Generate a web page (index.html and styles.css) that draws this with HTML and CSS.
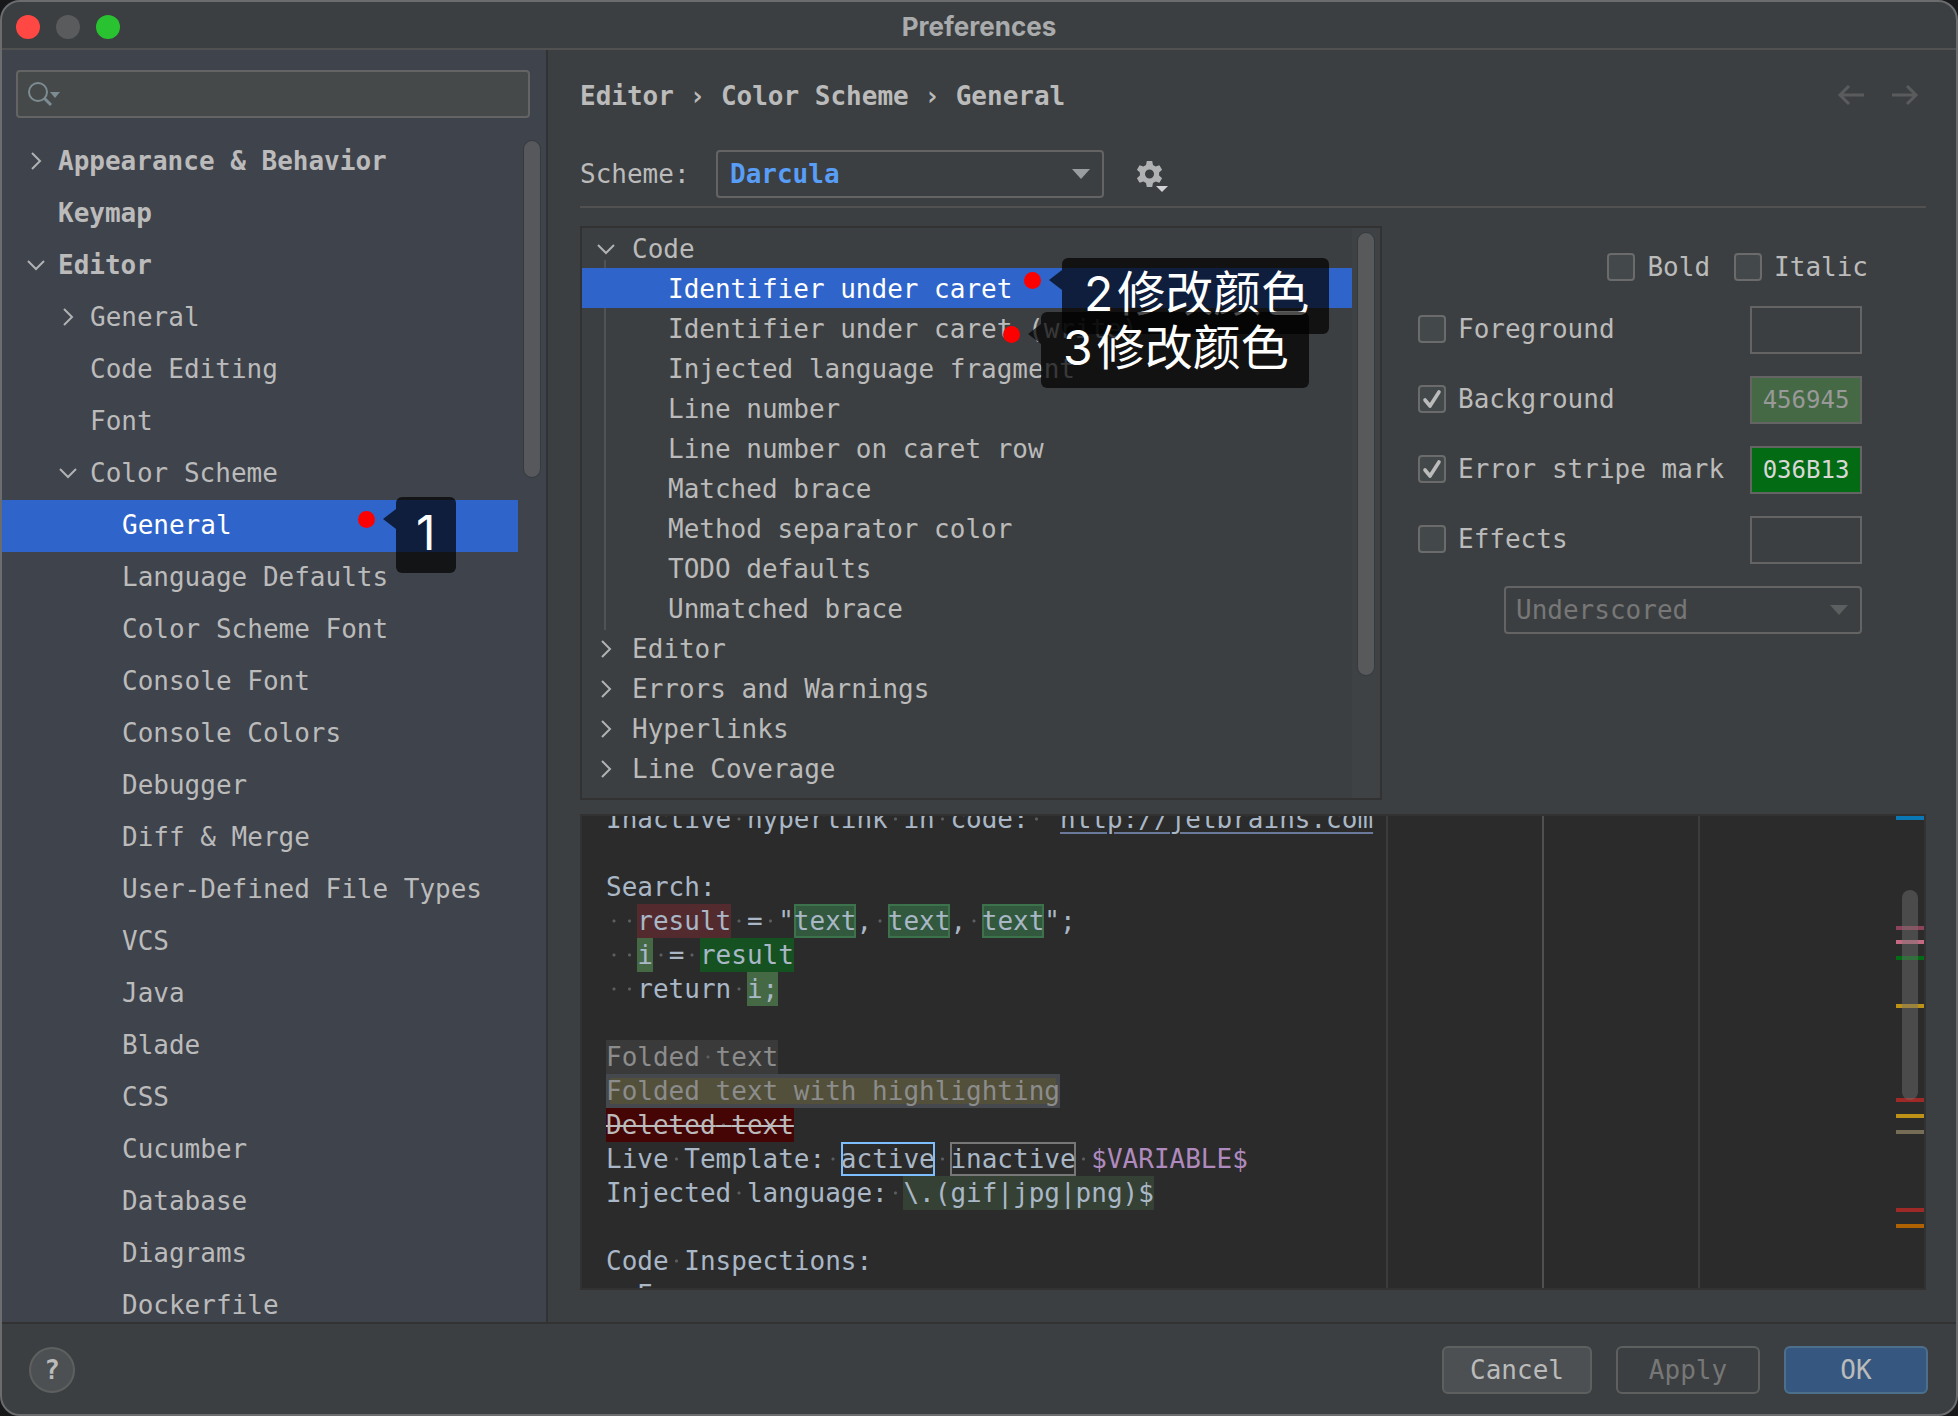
FILE: index.html
```html
<!DOCTYPE html>
<html lang="en">
<head>
<meta charset="utf-8">
<title>Preferences</title>
<link rel="stylesheet" href="styles.css">
</head>
<body>
<svg class="defs" aria-hidden="true">
  <symbol id="right" viewBox="0 0 20 20"><path d="M6 2l8 8-8 8" fill="none" stroke="currentColor" stroke-width="2"/></symbol>
  <symbol id="down" viewBox="0 0 20 20"><path d="M2 6l8 8 8-8" fill="none" stroke="currentColor" stroke-width="2"/></symbol>
  <symbol id="tri" viewBox="0 0 18 10"><path d="M0 0h18l-9 10z" fill="currentColor"/></symbol>
  <symbol id="tick" viewBox="0 0 28 28"><path d="M7 15l5 6L21 7" fill="none" stroke="currentColor" stroke-width="3.6" stroke-linecap="round" stroke-linejoin="round"/></symbol>
</svg>
<div class="window">
  <header class="titlebar">
    <div class="lights"><button class="light close" aria-label="Close"></button><button class="light min" aria-label="Minimize"></button><button class="light zoom" aria-label="Zoom"></button></div>
    <h1>Preferences</h1>
  </header>
  <div class="body">
    <nav class="sidebar">
      <div class="search">
        <svg width="34" height="26" viewBox="0 0 34 26" aria-hidden="true"><circle cx="10" cy="11" r="9" fill="none" stroke="#7d8b92" stroke-width="2"/><path d="M16 17l7 7" stroke="#7d8b92" stroke-width="3"/><path d="M22 11h10l-5 6z" fill="#7d8b92"/></svg>
        <input type="text" aria-label="Search settings">
      </div>
      <div class="navscroll">
        <ul class="navlist">
          <li class="strong"><svg class="chev"><use href="#right"/></svg>Appearance &amp; Behavior</li>
          <li class="strong"><span class="chev"></span>Keymap</li>
          <li class="strong"><svg class="chev"><use href="#down"/></svg>Editor</li>
          <li class="l1"><svg class="chev"><use href="#right"/></svg>General</li>
          <li class="l1"><span class="chev"></span>Code Editing</li>
          <li class="l1"><span class="chev"></span>Font</li>
          <li class="l1"><svg class="chev"><use href="#down"/></svg>Color Scheme</li>
          <li class="l2 selected">General
            <span class="note note-one"><span class="dot"></span><span class="tip"></span><span class="bubble">1</span></span></li>
          <li class="l2">Language Defaults</li>
          <li class="l2">Color Scheme Font</li>
          <li class="l2">Console Font</li>
          <li class="l2">Console Colors</li>
          <li class="l2">Debugger</li>
          <li class="l2">Diff &amp; Merge</li>
          <li class="l2">User-Defined File Types</li>
          <li class="l2">VCS</li>
          <li class="l2">Java</li>
          <li class="l2">Blade</li>
          <li class="l2">CSS</li>
          <li class="l2">Cucumber</li>
          <li class="l2">Database</li>
          <li class="l2">Diagrams</li>
          <li class="l2">Dockerfile</li>
        </ul>
        <div class="track"><div class="thumb nav-thumb"></div></div>
      </div>
    </nav>
    <main class="content">
      <div class="crumbs">
        <h2>Editor › Color Scheme › General</h2>
        <button class="plain" aria-label="Back"><svg width="28" height="22" viewBox="0 0 28 22"><path d="M27 10H3M12 1l-9 9 9 9" fill="none" stroke="#5a5b5c" stroke-width="3"/></svg></button>
        <button class="plain" aria-label="Forward"><svg width="28" height="22" viewBox="0 0 28 22"><path d="M1 10h24M16 1l9 9-9 9" fill="none" stroke="#5a5b5c" stroke-width="3"/></svg></button>
      </div>
      <div class="scheme">
        <label for="scheme">Scheme:</label>
        <span class="select scheme-select"><select id="scheme"><option>Darcula</option></select><svg><use href="#tri"/></svg></span>
        <button class="plain" aria-label="Scheme actions"><svg width="33" height="36" viewBox="0 0 33 36"><path transform="translate(0 4)" fill="#afb1b3" fill-rule="evenodd" d="M10.800 1h5.400l.8 4 2.600 1.500 3.800-1.300 2.700 4.600-3 2.700v3l3 2.700-2.700 4.600-3.800-1.300-2.600 1.500-.8 4h-5.400l-.8-4-2.600-1.500-3.800 1.300L.9 18.200l3-2.700v-3l-3-2.700 2.700-4.600 3.800 1.300L10 5zM13.500 9.500a4.500 4.500 0 1 0 0 9 4.500 4.500 0 0 0 0-9z"/><path d="M20 30h12l-6 6z" fill="#d0d2d4"/></svg></button>
      </div>
      <div class="panes">
        <div class="upper">
          <div class="tree">
            <ul class="treelist">
              <li><svg class="chev"><use href="#down"/></svg>Code</li>
              <li class="kid selected">Identifier under caret
                <span class="note note-two"><span class="dot"></span><span class="tip"></span><span class="bubble"><span class="num">2</span>修改颜色</span></span></li>
              <li class="kid">Identifier under caret (write)
                <span class="note note-three"><span class="dot"></span><span class="tip"></span><span class="bubble"><span class="num">3</span>修改颜色</span></span></li>
              <li class="kid">Injected language fragment</li>
              <li class="kid">Line number</li>
              <li class="kid">Line number on caret row</li>
              <li class="kid">Matched brace</li>
              <li class="kid">Method separator color</li>
              <li class="kid">TODO defaults</li>
              <li class="kid">Unmatched brace</li>
              <li><svg class="chev"><use href="#right"/></svg>Editor</li>
              <li><svg class="chev"><use href="#right"/></svg>Errors and Warnings</li>
              <li><svg class="chev"><use href="#right"/></svg>Hyperlinks</li>
              <li><svg class="chev"><use href="#right"/></svg>Line Coverage</li>
              <li><span class="chev"></span>Live Template</li>
            </ul>
            <div class="track tree-track"><div class="thumb tree-thumb"></div></div>
          </div>
          <form class="attrs">
            <div class="styles">
              <label class="check"><span class="box"><input type="checkbox"></span>Bold</label>
              <label class="check"><span class="box"><input type="checkbox"></span>Italic</label>
            </div>
            <div class="attr"><label class="check"><span class="box"><input type="checkbox"></span>Foreground</label><button type="button" class="swatch" aria-label="Foreground color"></button></div>
            <div class="attr"><label class="check"><span class="box"><input type="checkbox" checked><svg><use href="#tick"/></svg></span>Background</label><button type="button" class="swatch green">456945</button></div>
            <div class="attr"><label class="check"><span class="box"><input type="checkbox" checked><svg><use href="#tick"/></svg></span>Error stripe mark</label><button type="button" class="swatch vivid">036B13</button></div>
            <div class="attr"><label class="check"><span class="box"><input type="checkbox"></span>Effects</label><button type="button" class="swatch" aria-label="Effects color"></button></div>
            <span class="select effect-select"><select aria-label="Effect type" disabled><option>Underscored</option></select><svg><use href="#tri"/></svg></span>
          </form>
        </div>
        <div class="preview">
          <div class="code">
            <div>Inactive<i> </i>hyperlink<i> </i>in<i> </i>code:<i> </i>"<a href="#link">http://jetbrains.com</a>"</div>
            <div></div>
            <div>Search:</div>
            <div><i> </i><i> </i><b class="write">result</b><i> </i>=<i> </i>"<b class="found">text</b>,<i> </i><b class="found">text</b>,<i> </i><b class="found">text</b>";</div>
            <div><i> </i><i> </i><b class="ident">i</b><i> </i>=<i> </i><b class="read">result</b></div>
            <div><i> </i><i> </i>return<i> </i><b class="ident">i;</b></div>
            <div></div>
            <div><b class="fold">Folded<i> </i>text</b></div>
            <div><b class="foldhi">Folded text with highlighting</b></div>
            <div><b class="deleted">Deleted<i> </i>text</b></div>
            <div>Live<i> </i>Template:<i> </i><b class="active">active</b><i> </i><b class="inactive">inactive</b><i> </i><b class="var">$VARIABLE$</b></div>
            <div>Injected<i> </i>language:<i> </i><b class="inject">\.(gif|jpg|png)$</b></div>
            <div></div>
            <div>Code<i> </i>Inspections:</div>
            <div><i> </i><i> </i>Error</div>
          </div>
          <div class="stripes">
            <span class="mark" style="top:0;background:#0a78b4"></span>
            <span class="mark" style="top:110px;background:#8c4258"></span>
            <span class="mark" style="top:124px;background:#c46a80"></span>
            <span class="mark" style="top:140px;background:#036b13"></span>
            <span class="mark" style="top:188px;background:#be9117"></span>
            <span class="mark" style="top:282px;background:#9e2927"></span>
            <span class="mark" style="top:298px;background:#be9117"></span>
            <span class="mark" style="top:314px;background:#756d56"></span>
            <span class="mark" style="top:392px;background:#9e2927"></span>
            <span class="mark" style="top:408px;background:#b06100"></span>
            <div class="code-thumb"></div>
          </div>
        </div>
      </div>
    </main>
  </div>
  <footer class="footer">
    <button class="help" aria-label="Help">?</button>
    <button class="btn wide">Cancel</button>
    <button class="btn" disabled>Apply</button>
    <button class="btn primary">OK</button>
  </footer>
</div>
</body>
</html>
```
FILE: styles.css
```css
* { box-sizing: border-box; }
body {
  margin: 0;
  background: #17181a;
  color: #bbbbbb;
  font: 26px/40px "DejaVu Sans Mono", monospace;
}
button, input, select { font: inherit; color: inherit; margin: 0; padding: 0; }
ul { list-style: none; margin: 0; padding: 0; }
.defs { display: none; }
.plain { border: 0; background: none; display: flex; }

.window {
  height: 100vh;
  display: flex;
  flex-direction: column;
  background: #3c3f41;
  border: 2px solid #6a6c6e;
  border-radius: 20px;
  overflow: hidden;
}
.titlebar {
  flex: none;
  height: 48px;
  display: grid;
  grid-template-columns: 1fr auto 1fr;
  align-items: center;
  padding: 4px 14px 0;
  border-bottom: 2px solid #515151;
}
.titlebar h1 { margin: 0; font: 700 26px/32px Inter, sans-serif; color: #a9abac; }
.lights { display: flex; gap: 16px; }
.light { width: 24px; height: 24px; border: 0; border-radius: 50%; }
.close { background: #ff4744; }
.min { background: #5a5b5d; }
.zoom { background: #29c231; }

.body { flex: 1; min-height: 0; display: flex; }
.sidebar {
  flex: none;
  width: 546px;
  display: flex;
  flex-direction: column;
  background: #3f434c;
  border-right: 2px solid #323232;
  padding-top: 20px;
}
.search {
  flex: none;
  display: flex;
  align-items: center;
  gap: 8px;
  height: 48px;
  margin: 0 16px 18px 14px;
  padding: 0 10px;
  background: #45494a;
  border: 2px solid #646464;
  border-radius: 4px;
}
.search input { flex: 1; min-width: 0; border: 0; background: none; outline: 0; }
.navscroll { flex: 1; min-height: 0; display: flex; overflow: hidden; }
.navlist { flex: 1; }
.navlist li {
  position: relative;
  display: flex;
  align-items: center;
  gap: 12px;
  height: 52px;
  padding: 0 0 2px 24px;
  white-space: nowrap;
}
.navlist .l1 { padding-left: 56px; }
.navlist .l2 { padding-left: 120px; }
.navlist .strong { font-weight: 700; }
.chev { flex: none; width: 20px; height: 20px; color: #b0b2b4; }
.navlist .selected, .treelist .selected { background: #2f65ca; color: #ffffff; }
.track { flex: none; width: 28px; padding: 4px 5px; }
.thumb { width: 18px; border: 1px solid #36393d; border-radius: 9px; background: #56585b; }
.nav-thumb { height: 338px; }

.content {
  flex: 1;
  min-width: 0;
  display: flex;
  flex-direction: column;
  padding: 26px 30px 32px 32px;
}
.crumbs { display: flex; align-items: center; gap: 26px; height: 40px; padding-right: 7px; }
.crumbs h2 { flex: 1; margin: 0; font-size: 26px; line-height: 40px; }
.scheme {
  display: flex;
  align-items: center;
  height: 92px;
  padding-top: 34px;
  padding-bottom: 8px;
  border-bottom: 2px solid #515151;
}
.scheme label { width: 136px; }
.select { display: grid; align-items: center; height: 48px; }
.select select {
  grid-area: 1 / 1;
  width: 100%;
  height: 48px;
  padding: 0 12px;
  appearance: none;
  background: #3c3f41;
  border: 2px solid #646464;
  border-radius: 4px;
  opacity: 1;
}
.select svg { grid-area: 1 / 1; justify-self: end; width: 18px; height: 10px; margin-right: 14px; color: #9a9da0; pointer-events: none; }
.scheme-select { width: 388px; margin-right: 32px; }
.scheme-select select { color: #589df6; font-weight: 700; }

.panes { flex: 1; min-height: 0; display: flex; flex-direction: column; gap: 14px; padding-top: 18px; }
.upper { flex: 574 1 0; min-height: 0; display: flex; }
.tree { flex: 1; min-width: 0; display: flex; border: 2px solid #323232; overflow: hidden; }
.treelist {
  flex: 1;
  background: linear-gradient(#505355, #505355) 22px 32px / 2px 370px no-repeat;
}
.treelist li {
  position: relative;
  display: flex;
  align-items: center;
  gap: 16px;
  height: 40px;
  padding: 2px 0 0 14px;
  white-space: nowrap;
}
.treelist .kid { padding-left: 86px; }
.tree-track { background: #3f4244; }
.tree-thumb { height: 444px; background: #58595b; }

.attrs { flex: none; width: 544px; padding: 20px 64px 0 36px; }
.styles { display: flex; justify-content: flex-end; gap: 24px; height: 60px; margin-right: -6px; }
.check { display: flex; align-items: center; gap: 12px; height: 42px; white-space: nowrap; }
.box { display: grid; width: 28px; height: 28px; }
.box input {
  grid-area: 1 / 1;
  width: 28px;
  height: 28px;
  appearance: none;
  background: #43494a;
  border: 2px solid #6b6b6b;
  border-radius: 4px;
}
.box svg { grid-area: 1 / 1; width: 28px; height: 28px; pointer-events: none; }
.attr { display: flex; justify-content: space-between; height: 48px; margin-bottom: 22px; }
.attr .check { height: 46px; }
.swatch { width: 112px; height: 48px; border: 2px solid #646464; background: none; font-size: 24px; }
.green { background: #456945; color: #999999; }
.vivid { background: #036b13; color: #d8d8d8; }
.effect-select { width: 358px; margin-left: auto; }
.effect-select select { color: #777777; padding: 0 10px; }
.effect-select svg { color: #5c5f60; }

.preview {
  flex: 472 1 0;
  min-height: 0;
  display: flex;
  border: 2px solid #323232;
  overflow: hidden;
  color: #a9b7c6;
  background:
    linear-gradient(#3c3c3c, #3c3c3c) 804px 0 / 2px 100% no-repeat,
    linear-gradient(#505050, #505050) 960px 0 / 2px 100% no-repeat,
    linear-gradient(#3c3c3c, #3c3c3c) 1116px 0 / 2px 100% no-repeat,
    #2b2b2b;
}
.code { flex: 1; min-width: 0; margin-top: -14px; padding-left: 24px; line-height: 34px; }
.code div { height: 34px; white-space: pre; }
.code a { color: inherit; text-decoration: underline #6b7a9a 2px; text-underline-offset: 4px; }
.code i { background: radial-gradient(circle, #5c5f62 1px, transparent 2px); }
.code b { display: inline-block; height: 34px; font-weight: 400; vertical-align: top; }
.code .write { background: #532b2e; }
.code .found { background: #32593d; box-shadow: inset 0 0 0 2px #3d734c; }
.code .ident { background: #456945; }
.code .read { background: #165221; }
.code .fold { background: #3a3a3a; color: #8c8c8c; }
.code .foldhi { background: #52503a; box-shadow: inset 0 0 0 4px #45494d; color: #8c8c8c; }
.code .deleted { background: #450505; color: #bbbbbb; text-decoration: line-through 2px; }
.code .active { box-shadow: inset 0 0 0 2px #7ebeff; }
.code .inactive { box-shadow: inset 0 0 0 2px #777777; }
.code .var { color: #ae8abe; }
.code .inject { background: #364135; }
.stripes { position: relative; flex: none; width: 28px; }
.mark { position: absolute; left: 0; width: 28px; height: 4px; }
.code-thumb { position: absolute; left: 6px; top: 74px; width: 16px; height: 210px; border-radius: 8px; background: rgba(115, 115, 115, .45); }

.footer {
  flex: none;
  display: flex;
  align-items: center;
  gap: 24px;
  height: 92px;
  padding: 2px 28px 0 27px;
  border-top: 2px solid #323232;
}
.help {
  width: 46px;
  height: 46px;
  margin-right: auto;
  border: 2px solid #5e6060;
  border-radius: 50%;
  background: #4c5052;
  font-weight: 700;
  line-height: 40px;
}
.btn { width: 144px; height: 48px; border: 2px solid #5e6060; border-radius: 6px; background: #4c5052; }
.btn.wide { width: 150px; }
.btn:disabled { background: none; color: #777777; }
.btn.primary { background: #365880; border-color: #4c708c; }

/* Numbered callouts lie over the lists */
.note { position: absolute; z-index: 2; width: 110px; height: 76px; color: #ffffff; }
.note-one { left: 356px; top: -3px; }
.note-two { left: 442px; top: -10px; }
.note-three { left: 421px; top: 4px; }
.dot { position: absolute; left: 0; top: 14px; width: 17px; height: 17px; border-radius: 50%; background: #ff0000; }
.tip { position: absolute; left: 25px; top: 12px; width: 13px; height: 20px; background: rgba(0, 0, 0, .7); clip-path: polygon(100% 0, 100% 100%, 0 50%); }
.bubble {
  position: absolute;
  left: 38px;
  top: 0;
  height: 76px;
  padding: 0 20px 0 22px;
  border-radius: 6px;
  background: rgba(0, 0, 0, .7);
  font: 48px/72px Inter, "Noto Sans CJK SC", sans-serif;
  white-space: nowrap;
}
.num { margin-right: 4px; }
.note-one .bubble { padding: 0 20px; }
```
